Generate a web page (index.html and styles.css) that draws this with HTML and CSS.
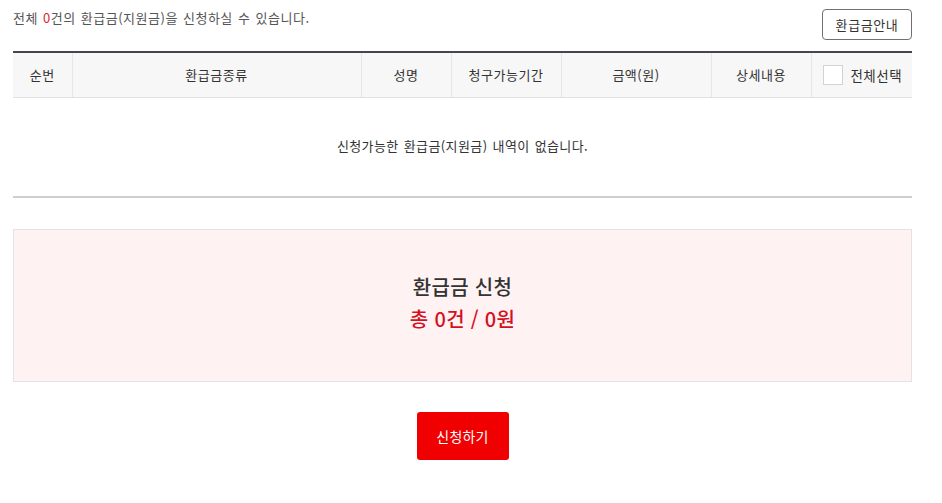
FILE: index.html
```html
<!DOCTYPE html>
<html lang="ko">
<head>
<meta charset="utf-8">
<title>환급금 신청</title>
<link rel="stylesheet" href="styles.css">
</head>
<body>
<div class="wrap">
  <div class="topbar">
    <p class="info">전체 <span class="red">0</span>건의 환급금(지원금)을 신청하실 수 있습니다.</p>
    <button class="guide-btn" type="button">환급금안내</button>
  </div>
  <table class="list">
    <colgroup>
      <col class="c1"><col class="c2"><col class="c3"><col class="c4"><col class="c5"><col class="c6"><col class="c7">
    </colgroup>
    <thead>
      <tr>
        <th>순번</th>
        <th>환급금종류</th>
        <th>성명</th>
        <th>청구가능기간</th>
        <th>금액(원)</th>
        <th>상세내용</th>
        <th><label class="chk"><span class="box"></span>전체선택</label></th>
      </tr>
    </thead>
    <tbody>
      <tr><td colspan="7" class="empty">신청가능한 환급금(지원금) 내역이 없습니다.</td></tr>
    </tbody>
  </table>
  <div class="summary">
    <p class="s-title">환급금 신청</p>
    <p class="s-total">총 0건 / 0원</p>
  </div>
  <div class="actions">
    <button class="apply-btn" type="button">신청하기</button>
  </div>
</div>
</body>
</html>
```
FILE: styles.css
```css
* { box-sizing: border-box; }
html, body { margin: 0; padding: 0; background: #fff; }
body {
  font-family: "Noto Sans CJK KR", "Noto Sans", sans-serif;
  color: #444;
}
.wrap {
  width: 899px;
  margin-left: 13px;
}
.topbar {
  display: flex;
  justify-content: space-between;
  align-items: flex-start;
  height: 51px;
  padding-top: 9px;
}
.info {
  margin: 0;
  font-size: 13px;
  letter-spacing: 0.5px;
  word-spacing: 1px;
  color: #555;
  line-height: 18px;
}
.red { color: #e0262e; }
.guide-btn {
  width: 90px;
  height: 31px;
  border: 1px solid #6f6f78;
  border-radius: 4px;
  background: #fff;
  font-family: inherit;
  font-size: 13px;
  letter-spacing: 0.6px;
  color: #333;
  padding: 0;
}
.list {
  width: 899px;
  border-collapse: collapse;
  table-layout: fixed;
  border-top: 2px solid #45454d;
}
.c1 { width: 59px; }
.c2 { width: 289px; }
.c3 { width: 90px; }
.c4 { width: 110px; }
.c5 { width: 150px; }
.c6 { width: 100px; }
.c7 { width: 101px; }
.list th {
  height: 45px;
  background: #f7f7f7;
  border-bottom: 1px solid #e2e2e2;
  border-left: 1px solid #e6e6e6;
  font-weight: normal;
  font-size: 13px;
  letter-spacing: 0.5px;
  color: #333;
  padding: 0;
}
.list th:first-child { border-left: none; }
.chk {
  display: flex;
  align-items: center;
  justify-content: center;
  gap: 7px;
  font-size: 13.5px;
  padding-left: 2px;
}
.box {
  display: inline-block;
  width: 20px;
  height: 20px;
  background: #fff;
  border: 1px solid #d3d3d3;
}
.empty {
  height: 100px;
  text-align: center;
  font-size: 13px;
  letter-spacing: 0.4px;
  word-spacing: 1px;
  color: #333;
  border-bottom: 2px solid #cfcfd3;
  padding: 0 0 2px 0;
}
.summary {
  margin-top: 31px;
  height: 153px;
  background: #fff2f2;
  border: 1px solid #e3e3e3;
  display: flex;
  flex-direction: column;
  align-items: center;
  justify-content: center;
  gap: 4px;
  padding-bottom: 6px;
}
.summary p { margin: 0; line-height: 28px; }
.s-title {
  font-size: 20px;
  font-weight: 500;
  color: #333;
  letter-spacing: 0.3px;
}
.s-total {
  font-size: 20px;
  font-weight: 500;
  color: #d4101e;
  letter-spacing: 0.3px;
}
.actions {
  display: flex;
  justify-content: center;
  padding-top: 30px;
}
.apply-btn {
  width: 92px;
  height: 48px;
  background: #f00000;
  border: none;
  border-radius: 3px;
  color: #fff;
  font-family: inherit;
  font-size: 14px;
  letter-spacing: 0.2px;
  padding: 0;
}
```
